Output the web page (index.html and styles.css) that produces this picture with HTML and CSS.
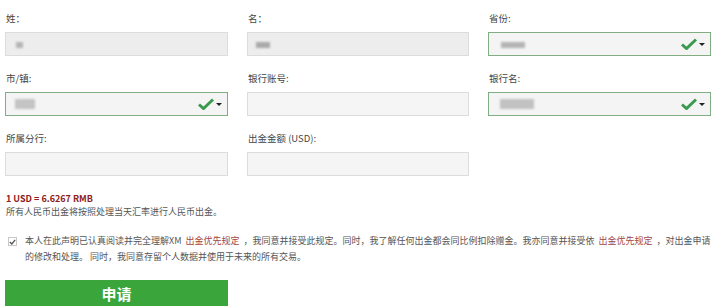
FILE: index.html
```html
<!DOCTYPE html>
<html lang="zh-CN">

<head>
    <meta charset="UTF-8">
    <title>出金申请</title>
    <link rel="stylesheet" href="styles.css">
</head>

<body>
    <form class="withdraw">
        <div class="grid">
            <div class="field">
                <label>姓：</label>
                <div class="box readonly"><span class="blur b1"></span></div>
            </div>
            <div class="field">
                <label>名：</label>
                <div class="box readonly"><span class="blur b2"></span></div>
            </div>
            <div class="field">
                <label>省份:</label>
                <div class="box select"><span class="blur b3"></span>
                    <span class="ok">
                        <svg width="16" height="12" viewBox="0 0 16 12"><path d="M1 6.5 L5.5 10.5 L15 1.5" fill="none" stroke="#3a9a4e" stroke-width="3"/></svg>
                        <i class="caret"></i>
                    </span>
                </div>
            </div>

            <div class="field">
                <label>市/镇:</label>
                <div class="box select"><span class="blur b4"></span>
                    <span class="ok">
                        <svg width="16" height="12" viewBox="0 0 16 12"><path d="M1 6.5 L5.5 10.5 L15 1.5" fill="none" stroke="#3a9a4e" stroke-width="3"/></svg>
                        <i class="caret"></i>
                    </span>
                </div>
            </div>
            <div class="field">
                <label>银行账号:</label>
                <div class="box"></div>
            </div>
            <div class="field">
                <label>银行名:</label>
                <div class="box select"><span class="blur b5"></span>
                    <span class="ok">
                        <svg width="16" height="12" viewBox="0 0 16 12"><path d="M1 6.5 L5.5 10.5 L15 1.5" fill="none" stroke="#3a9a4e" stroke-width="3"/></svg>
                        <i class="caret"></i>
                    </span>
                </div>
            </div>

            <div class="field">
                <label>所属分行:</label>
                <div class="box"></div>
            </div>
            <div class="field">
                <label>出金金额 (USD):</label>
                <div class="box"></div>
            </div>
        </div>

        <div class="rate">
            <p class="usd">1 USD = 6.6267 RMB</p>
            <p>所有人民币出金将按照处理当天汇率进行人民币出金。</p>
        </div>

        <div class="agree">
            <span class="check">
                <svg width="7" height="6" viewBox="0 0 7 6"><path d="M0.8 3 L2.8 5 L6.2 0.8" fill="none" stroke="#555" stroke-width="1.3"/></svg>
            </span>
            <p>本人在此声明已认真阅读并完全理解XM<a href="#">出金优先规定</a>，我同意并接受此规定。同时，我了解任何出金都会同比例扣除赠金。我亦同意并接受依<a href="#">出金优先规定</a>，对出金申请<br>的修改和处理。 同时，我同意存留个人数据并使用于未来的所有交易。</p>
        </div>

        <button type="button" class="submit">申请</button>
    </form>
</body>

</html>
```

FILE: styles.css
```css
body {
    margin: 0;
    background: #fff;
    font-family: "Noto Sans CJK SC", "Liberation Sans", sans-serif;
    color: #444;
}

.withdraw {
    padding: 12px 9px 0 5px;
}

.grid {
    display: grid;
    grid-template-columns: 223px 222px 223px;
    column-gap: 19px;
    row-gap: 16px;
}

.field label {
    display: block;
    height: 12px;
    line-height: 12px;
    font-size: 9.5px;
    color: #444;
    padding-left: 1px;
    margin-bottom: 8px;
}

.box {
    position: relative;
    height: 24px;
    box-sizing: border-box;
    border: 1px solid #dcdcdc;
    background: #f5f5f5;
}

.box.readonly {
    background: #ededed;
}

.box.select {
    border-color: #82ad82;
    background: #f4f4f4;
}

.blur {
    position: absolute;
    top: 9px;
    height: 6px;
    background: #b5b5b5;
    filter: blur(1.2px);
}

.b1 { left: 10px; width: 7px; }
.b2 { left: 8px; width: 14px; background: #aaa; }
.b3 { left: 12px; width: 24px; }
.b4 { left: 9px; width: 20px; top: 6px; height: 10px; background: #c4c4c4; }
.b5 { left: 11px; width: 34px; top: 6px; height: 10px; background: #c2c2c2; }

.ok {
    position: absolute;
    right: 5px;
    top: 5px;
    display: flex;
    align-items: center;
    gap: 2px;
}

.caret {
    width: 0;
    height: 0;
    border-left: 3px solid transparent;
    border-right: 3px solid transparent;
    border-top: 3px solid #222;
}

.rate {
    margin-top: 16px;
    padding-left: 1px;
}

.rate p {
    margin: 0;
    font-size: 9px;
    line-height: 13px;
    color: #555;
}

.rate .usd {
    color: #8e2020;
    font-weight: bold;
}

.agree {
    display: flex;
    margin-top: 15px;
}

.check {
    flex: none;
    width: 9px;
    height: 9px;
    box-sizing: border-box;
    border: 1px solid #c8c8c8;
    margin: 4px 0 0 3px;
    display: flex;
    align-items: center;
    justify-content: center;
}

.agree p {
    margin: 0 0 0 8px;
    font-size: 9px;
    line-height: 16px;
    color: #555;
}

.agree a {
    color: #a2463f;
    text-decoration: none;
    margin: 0 4px;
}

.submit {
    display: block;
    margin-top: 15px;
    width: 223px;
    height: 26px;
    border: none;
    background: #3aa53a;
    color: #fff;
    font-family: "Noto Sans CJK SC", sans-serif;
    font-size: 15px;
    font-weight: bold;
    padding: 0;
}
```
